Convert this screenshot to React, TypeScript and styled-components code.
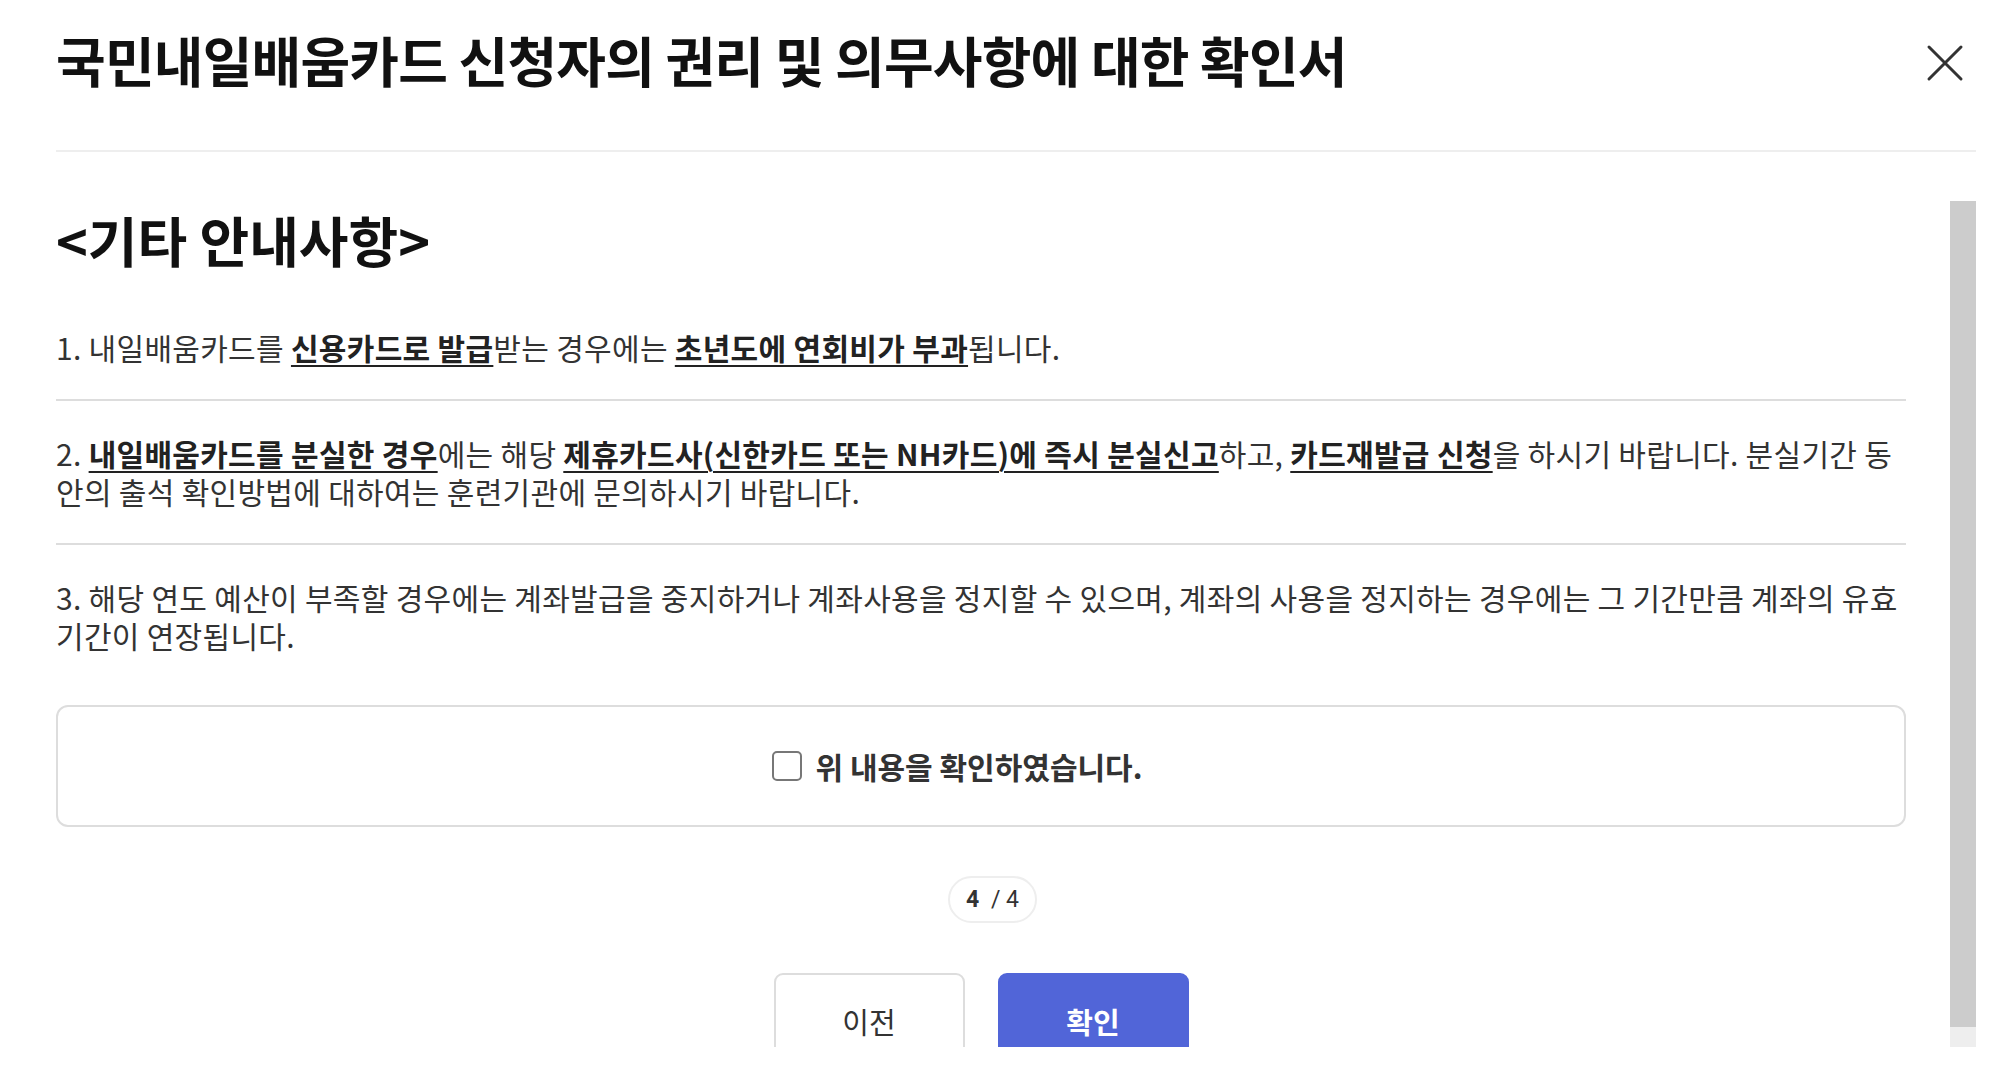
import styled, { createGlobalStyle } from "styled-components";

type Segment = { text: string; strong?: boolean };

// each notice is a list of lines, each line a list of segments
const notices: Segment[][][] = [
  [
    [
      { text: "1. 내일배움카드를 " },
      { text: "신용카드로 발급", strong: true },
      { text: "받는 경우에는 " },
      { text: "초년도에 연회비가 부과", strong: true },
      { text: "됩니다." },
    ],
  ],
  [
    [
      { text: "2. " },
      { text: "내일배움카드를 분실한 경우", strong: true },
      { text: "에는 해당 " },
      { text: "제휴카드사(신한카드 또는 NH카드)에 즉시 분실신고", strong: true },
      { text: "하고, " },
      { text: "카드재발급 신청", strong: true },
      { text: "을 하시기 바랍니다. 분실기간 동" },
    ],
    [{ text: "안의 출석 확인방법에 대하여는 훈련기관에 문의하시기 바랍니다." }],
  ],
  [
    [
      {
        text: "3. 해당 연도 예산이 부족할 경우에는 계좌발급을 중지하거나 계좌사용을 정지할 수 있으며, 계좌의 사용을 정지하는 경우에는 그 기간만큼 계좌의 유효",
      },
    ],
    [{ text: "기간이 연장됩니다." }],
  ],
];

export default function App() {
  return (
    <>
      <GlobalStyle />
      <Modal>
        <Header>
          <Title>국민내일배움카드 신청자의 권리 및 의무사항에 대한 확인서</Title>
          <CloseButton aria-label="닫기">
            <svg width="40" height="40" viewBox="0 0 40 40">
              <path
                d="M4 4 L36 36 M36 4 L4 36"
                stroke="#333"
                strokeWidth="3"
                strokeLinecap="round"
                fill="none"
              />
            </svg>
          </CloseButton>
        </Header>

        <ScrollArea>
          <Content>
            <Heading>&lt;기타 안내사항&gt;</Heading>
            <NoticeList>
              {notices.map((lines, i) => (
                <Notice key={i}>
                  {lines.map((segments, k) => (
                    <Line key={k}>
                      {segments.map((seg, j) =>
                        seg.strong ? (
                          <Strong key={j}>{seg.text}</Strong>
                        ) : (
                          <span key={j}>{seg.text}</span>
                        )
                      )}
                    </Line>
                  ))}
                </Notice>
              ))}
            </NoticeList>

            <ConfirmBox>
              <CheckLabel>
                <CheckBox type="checkbox" />
                위 내용을 확인하였습니다.
              </CheckLabel>
            </ConfirmBox>

            <PageBadge>
              <b>4</b> / 4
            </PageBadge>

            <ButtonRow>
              <ActionButton $primary={false}>이전</ActionButton>
              <ActionButton $primary>확인</ActionButton>
            </ButtonRow>
          </Content>

          <ScrollTrack>
            <ScrollThumb />
          </ScrollTrack>
        </ScrollArea>
      </Modal>
    </>
  );
}

// Styled Components

const GlobalStyle = createGlobalStyle`
  * {
    box-sizing: border-box;
  }

  html,
  body {
    margin: 0;
    padding: 0;
    background: #fff;
  }

  body {
    font-family: "Noto Sans CJK KR", "Noto Sans", sans-serif;
    color: #333;
  }
`;

const Modal = styled.div`
  display: flex;
  flex-direction: column;
  height: 100vh;
  padding: 0 20px 21px 56px;
  background: #fff;
`;

const Header = styled.header`
  display: flex;
  align-items: center;
  height: 152px;
  flex-shrink: 0;
  padding-bottom: 24px;
  border-bottom: 2px solid #eee;
`;

const Title = styled.h1`
  margin: 0 0 6px;
  font-size: 54px;
  font-weight: 700;
  line-height: 78px;
  letter-spacing: -0.8px;
  color: #111;
`;

const CloseButton = styled.button`
  all: unset;
  display: flex;
  margin-left: auto;
  margin-right: 11px;
  cursor: pointer;
`;

const ScrollArea = styled.div`
  flex: 1;
  display: flex;
  gap: 44px;
  margin-top: 49px;
  min-height: 0;
`;

const Content = styled.div`
  flex: 1;
  display: flex;
  flex-direction: column;
  overflow: hidden;

  & > * {
    flex-shrink: 0;
  }
`;

const Heading = styled.h2`
  margin: 0;
  font-size: 54px;
  font-weight: 700;
  line-height: 78px;
  color: #111;
`;

const NoticeList = styled.div`
  margin-top: 16px;
`;

const Notice = styled.p`
  margin: 0;
  padding: 33px 0;
  font-size: 30px;
  line-height: 38px;
  letter-spacing: 0.3px;
  color: #333;

  & + & {
    border-top: 2px solid #ddd;
  }
`;

const Line = styled.span`
  display: block;
  white-space: nowrap;
`;

const Strong = styled.span`
  font-weight: 700;
  color: #222;
  text-decoration: underline;
  text-decoration-thickness: 2px;
  text-underline-offset: 5px;
`;

const ConfirmBox = styled.div`
  display: flex;
  align-items: center;
  justify-content: center;
  height: 122px;
  margin-top: 18px;
  border: 2px solid #ddd;
  border-radius: 12px;
`;

const CheckLabel = styled.label`
  display: flex;
  align-items: center;
  gap: 14px;
  margin-right: 48px;
  font-size: 30px;
  font-weight: 700;
  color: #333;
  cursor: pointer;
`;

const CheckBox = styled.input`
  appearance: none;
  width: 30px;
  height: 30px;
  margin: 0;
  border: 2px solid #777;
  border-radius: 5px;
  background: #fff;
  cursor: pointer;
`;

const PageBadge = styled.div`
  align-self: center;
  display: flex;
  align-items: center;
  justify-content: center;
  gap: 6px;
  width: 89px;
  height: 47px;
  margin: 49px 0 0 23px;
  border: 2px solid #eee;
  border-radius: 24px;
  font-family: "Roboto", "Noto Sans", sans-serif;
  font-size: 23px;
  color: #333;
  white-space: pre;

  b {
    font-weight: 700;
  }
`;

const ButtonRow = styled.div`
  display: flex;
  justify-content: center;
  gap: 33px;
  margin-top: 50px;
  padding-bottom: 2px;
`;

const ActionButton = styled.button<{ $primary: boolean }>`
  width: 191px;
  height: 96px;
  flex-shrink: 0;
  border-radius: 9px;
  border: 2px solid ${({ $primary }) => ($primary ? "#5165d8" : "#ddd")};
  background: ${({ $primary }) => ($primary ? "#5165d8" : "#fff")};
  color: ${({ $primary }) => ($primary ? "#fff" : "#333")};
  font-family: "Noto Sans CJK KR", "Noto Sans", sans-serif;
  font-size: 29px;
  font-weight: ${({ $primary }) => ($primary ? 700 : 400)};
  cursor: pointer;
`;

const ScrollTrack = styled.div`
  width: 26px;
  flex-shrink: 0;
  display: flex;
  flex-direction: column;
  background: #eee;
`;

const ScrollThumb = styled.div`
  height: calc(100% - 20px);
  background: #ccc;
`;
